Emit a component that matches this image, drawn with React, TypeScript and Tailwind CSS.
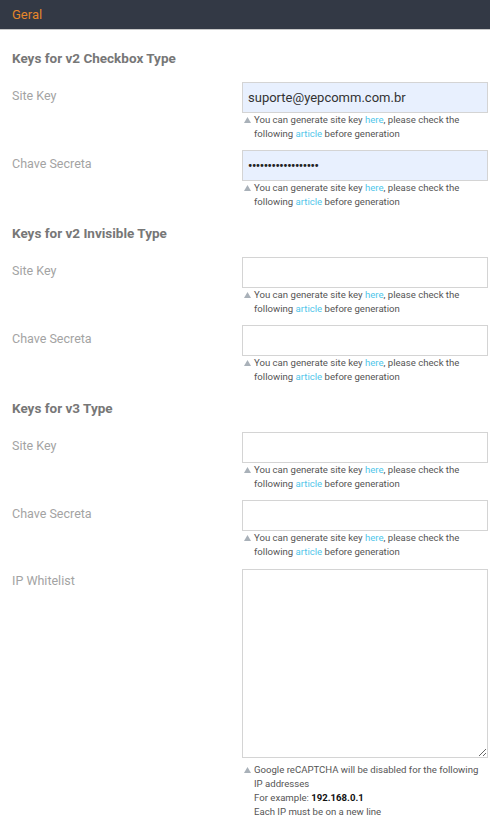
import React from "react";

function Hint({ children, className = "" }: { children: React.ReactNode; className?: string }) {
  return (
    <div className={"flex text-[9.6px] leading-[14px] text-[#555] " + className}>
      <span className="w-[12px] shrink-0 pl-[2px] pt-[4px]">
        <svg width="7" height="6" viewBox="0 0 7 6" className="block"><polygon points="3.5,0 7,6 0,6" fill="#a9b1b9" /></svg>
      </span>
      <div>{children}</div>
    </div>
  );
}

function KeyHint() {
  return (
    <Hint>
      You can generate site key <span className="text-[#4fc6ea]">here</span>, please check the following{" "}
      <span className="text-[#4fc6ea]">article</span> before generation
    </Hint>
  );
}

function Row({ label, value, password }: { label: string; value?: string; password?: boolean }) {
  const filled = value !== undefined;
  return (
    <div className="flex h-[68px]">
      <div className="w-[242px] shrink-0 pl-[12px] pt-[5px] text-[12.5px] leading-[18px] text-[#a3a3a3]">{label}</div>
      <div className="w-[246px]">
        <div
          className={
            "h-[31px] border border-[#d4d4d4] flex items-center px-[5px] " +
            (filled ? "bg-[#e8f0fe]" : "bg-white")
          }
        >
          {filled && (
            password ? (
              <span className="text-[12px] text-[#222] tracking-[-0.4px] font-bold leading-none">{value}</span>
            ) : (
              <span className="text-[13px] text-[#333]">{value}</span>
            )
          )}
        </div>
        <KeyHint />
      </div>
    </div>
  );
}

function Heading({ children }: { children: React.ReactNode }) {
  return (
    <div className="pl-[12px] h-[33px] text-[13.5px] leading-[18px] font-bold text-[#777]">{children}</div>
  );
}

export default function App() {
  return (
    <div className="w-[490px] h-[832px] bg-white overflow-hidden" style={{ fontFamily: "Roboto, 'Liberation Sans', sans-serif" }}>
      <div className="h-[30px] bg-[#333945] border-b border-[#c8c8c8] flex items-center pl-[12px]">
        <span className="text-[13px] text-[#e5862a]">Geral</span>
      </div>
      <div className="pt-[19px]">
        <Heading>Keys for v2 Checkbox Type</Heading>
        <Row label="Site Key" value="suporte@yepcomm.com.br" />
        <Row label="Chave Secreta" value={"•".repeat(18)} password />
        <div className="h-[6px]" />
        <Heading>Keys for v2 Invisible Type</Heading>
        <Row label="Site Key" />
        <Row label="Chave Secreta" />
        <div className="h-[6px]" />
        <Heading>Keys for v3 Type</Heading>
        <Row label="Site Key" />
        <Row label="Chave Secreta" />
        <div className="flex pt-[1px]">
          <div className="w-[242px] shrink-0 pl-[12px] pt-[3px] text-[12.5px] leading-[18px] text-[#a3a3a3]">IP Whitelist</div>
          <div className="w-[246px]">
            <textarea className="block w-full h-[189px] border border-[#d4d4d4] bg-white outline-none" />
            <Hint className="mt-[5px]">
              Google reCAPTCHA will be disabled for the following IP addresses
              <br />
              For example: <b className="text-[#111]">192.168.0.1</b>
              <br />
              Each IP must be on a new line
            </Hint>
          </div>
        </div>
      </div>
    </div>
  );
}
